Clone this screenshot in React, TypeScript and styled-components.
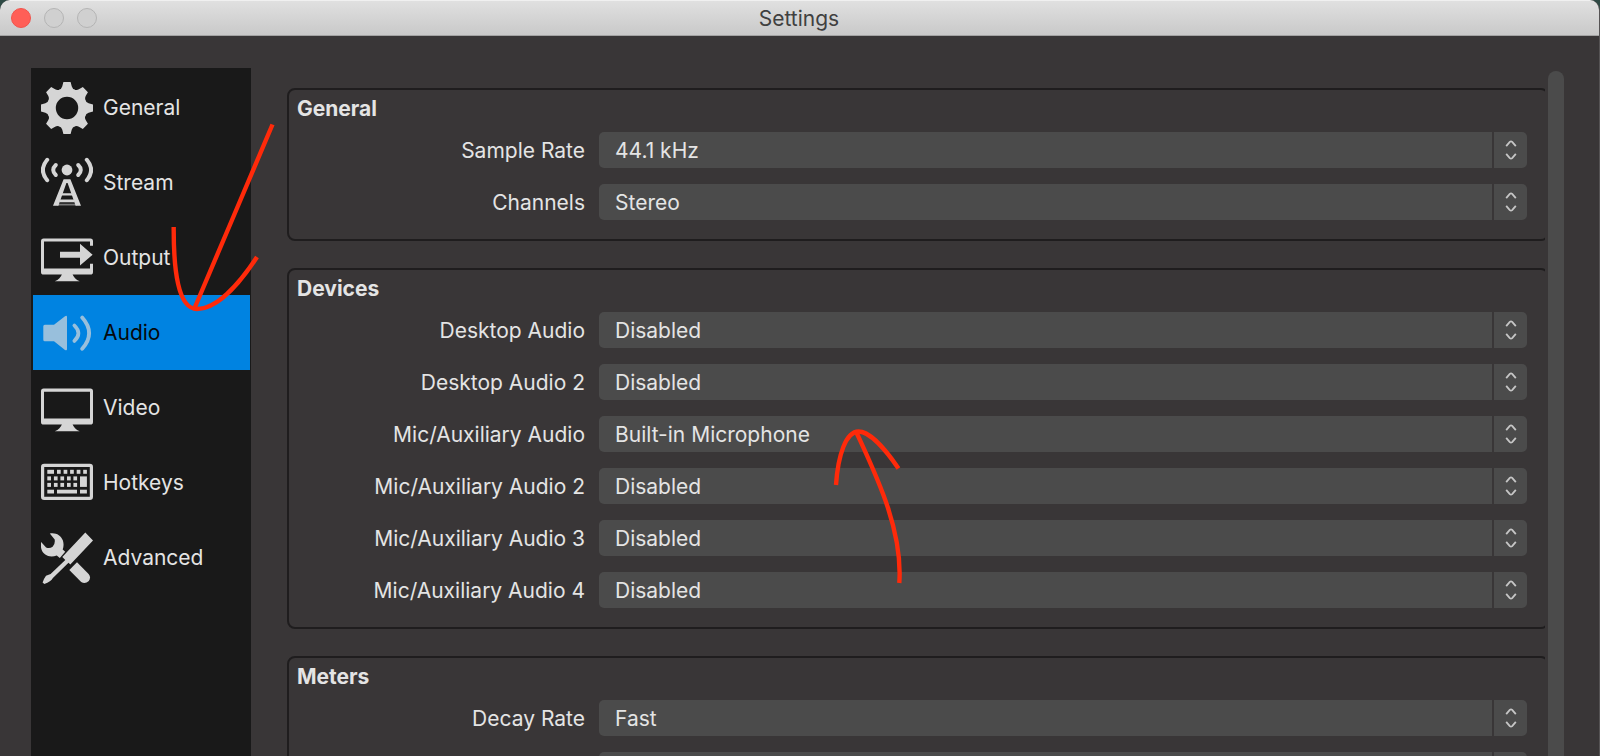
import React, { useId } from "react";
import styled, { createGlobalStyle } from "styled-components";

const GlobalStyle = createGlobalStyle`
  *, *::before, *::after { box-sizing: border-box; }
  body {
    margin: 0;
    background: #2f4a45;
    font-family: Inter, "Liberation Sans", sans-serif;
    font-size: 21px;
    line-height: 28px;
    color: #e4e4e4;
  }
`;

const Window = styled.div`
  display: flex;
  flex-direction: column;
  height: 100vh;
  overflow: hidden;
  border-radius: 10px 10px 0 0;
  border-right: 1px solid #555354;
  background: #393637;
`;

const TitleBar = styled.header`
  display: grid;
  grid-template-columns: 1fr auto 1fr;
  align-items: center;
  flex: none;
  height: 36px;
  padding: 0 12px 0 11px;
  border-top: 1px solid #f0f0f0;
  border-bottom: 1px solid #a3a3a3;
  background: linear-gradient(#e0e0e0, #c9c9c9);
`;

const WindowControls = styled.div`
  display: flex;
  gap: 13px;
`;

const WindowButton = styled.button<{ $close?: boolean }>`
  width: 20px;
  height: 20px;
  padding: 0;
  border: 1px solid ${(p) => (p.$close ? "#f0544d" : "#b4b4b4")};
  border-radius: 50%;
  background: ${(p) => (p.$close ? "#ff5f57" : "#d0d0d0")};
`;

const WindowTitle = styled.h1`
  margin: 0;
  padding-top: 2px;
  font-size: 21px;
  font-weight: 400;
  line-height: 28px;
  color: #404040;
`;

const Body = styled.div`
  display: flex;
  flex: 1;
  min-height: 0;
  padding: 32px 35px 0 31px;
`;

const Sidebar = styled.nav`
  flex: none;
  width: 220px;
  padding: 2px 1px 2px 2px;
  background: #191919;
`;

const NavButton = styled.button<{ $active?: boolean }>`
  display: flex;
  align-items: center;
  gap: 10px;
  width: 100%;
  height: 75px;
  padding: 0 8px;
  border: 0;
  font: inherit;
  text-align: left;
  color: ${(p) => (p.$active ? "#06090c" : "#e4e4e4")};
  background: ${(p) => (p.$active ? "#0083e1" : "transparent")};

  svg {
    flex: none;
    color: ${(p) => (p.$active ? "#98bfdc" : "#d5d5d5")};
  }
`;

const Panel = styled.main`
  display: flex;
  flex-direction: column;
  gap: 27px;
  flex: 1;
  min-width: 0;
  margin-left: 36px;
  padding-top: 20px;
  overflow: hidden;
`;

const Group = styled.fieldset`
  display: flex;
  flex-direction: column;
  flex: none;
  gap: 16px;
  min-width: 0;
  margin: 0 -4px 0 0;
  padding: 5px 20px 19px 8px;
  border: 2px solid #1f1d1e;
  border-radius: 8px;
`;

const GroupTitle = styled.h2`
  margin: 0 0 -7px;
  font-size: 21px;
  font-weight: 700;
  line-height: 28px;
`;

const Row = styled.div`
  display: grid;
  grid-template-columns: 288px 1fr;
  align-items: center;
  column-gap: 14px;
`;

const RowLabel = styled.label`
  padding-top: 2px;
  text-align: right;
`;

const SelectBox = styled.div`
  display: grid;
  grid-template-columns: 1fr 35px;
  height: 36px;
`;

const Select = styled.select`
  grid-area: 1 / 1 / 2 / 3;
  appearance: none;
  min-width: 0;
  padding: 2px 44px 0 16px;
  border: 0;
  border-radius: 5px;
  font: inherit;
  color: #e4e4e4;
  background: #4b4b4b;
`;

const Stepper = styled.span`
  display: flex;
  align-items: center;
  justify-content: center;
  grid-area: 1 / 2 / 2 / 3;
  border-left: 2px solid #393637;
  color: #c6c6c6;
  pointer-events: none;
`;

const ScrollTrack = styled.div`
  flex: none;
  width: 16px;
  margin: 3px 0 0 3px;
  border-radius: 8px 8px 0 0;
  background: #4b4b4b;
`;

const Annotation = styled.svg`
  position: absolute;
  top: 0;
  left: 0;
  pointer-events: none;
`;

function Icon({ children }: { children: React.ReactNode }) {
  return (
    <svg width="52" height="52" viewBox="0 0 52 52" fill="currentColor" aria-hidden="true">
      {children}
    </svg>
  );
}

const GearIcon = () => (
  <Icon>
    <circle cx="26" cy="26" r="15.4" fill="none" stroke="currentColor" strokeWidth="8.4" />
    {[0, 45, 90, 135, 180, 225, 270, 315].map((a) => (
      <path key={a} d="M22.4 0h7.2l1.2 4.4q.6 2.4 3.4 3.6v1h-16.400v-1q2.800-1.200 3.400-3.600z" transform={`rotate(${a} 26 26)`} />
    ))}
  </Icon>
);

const StreamIcon = () => (
  <Icon>
    <circle cx="26" cy="13" r="5.4" />
    <g fill="none" stroke="currentColor" strokeLinecap="round" strokeWidth="4">
      <path d="M14.800 8Q9.600 13 14.800 18M37.200 8Q42.400 13 37.200 18" />
      <path d="M6.200 2.800Q-2.400 13 6.200 23.200M45.800 2.800Q54.400 13 45.800 23.200" />
    </g>
    <path d="M22.600 22.200h6.800L40 48.800h-5.400L26.600 26h-1.200L17.400 48.800H12z" />
    <path d="M20.500 36.200h11v2.200h-11zM18.500 42.600h15v2.600h-15z" />
    <path d="M16 46.800h20v1.600H16z" opacity=".5" />
  </Icon>
);

const MonitorStand = () => <path d="M21 42h10.5q1.5 4.8 7.2 7.3H13.8Q19.500 46.8 21 42z" />;

const OutputIcon = () => (
  <Icon>
    <path d="M2.6 6.6h46.8q2.6 0 2.6 2.6v4.6h-3V9.6H3v26.8h46v-4.6h3v8.2q0 2.6-2.6 2.6H2.6Q0 42.6 0 40V9.2q0-2.6 2.6-2.6z" />
    <path d="M19 19.8h20v-8l12.6 11L39 33.6v-7.8H19z" />
    <MonitorStand />
  </Icon>
);

const VideoIcon = () => (
  <Icon>
    <path
      fillRule="evenodd"
      d="M2.6 6.6h46.8q2.6 0 2.6 2.6V40q0 2.6-2.6 2.6H2.6Q0 42.6 0 40V9.2q0-2.6 2.6-2.6zM3 9.8v26.6h46V9.800z"
    />
    <MonitorStand />
  </Icon>
);

const AudioIcon = () => (
  <Icon>
    <path d="M3.8 17.8H13L24 9.3q2-1.2 2 .8v32q0 2-2 .8L13 34.200H3.8q-1.5 0-1.5-1.5V19.300q0-1.5 1.5-1.5z" />
    <g fill="none" stroke="currentColor" strokeLinecap="round" strokeWidth="3.8">
      <path d="M33.400 18.5Q41.400 26.200 33.400 33.900" />
      <path d="M41.200 10.600Q55 26.200 41.200 41.800" />
    </g>
  </Icon>
);

const keys: [number, number, number, number][] = [
  [6.3, 12.8, 6.7, 4], [16, 12.8, 3.7, 4], [22.6, 12.8, 3.7, 4], [29.1, 12.8, 3.7, 4], [35.7, 12.8, 3.7, 4], [42.2, 12.8, 3.7, 4],
  [6.3, 19.4, 3.7, 4], [12.9, 19.4, 3.7, 4], [19.4, 19.4, 3.7, 4], [26, 19.4, 3.7, 4], [32.4, 19.4, 3.7, 4], [39, 19.4, 6.9, 10.5],
  [6.3, 25.9, 3.7, 4], [12.9, 25.9, 3.7, 4], [19.4, 25.9, 3.7, 4], [26, 25.9, 3.7, 4], [32.4, 25.9, 3.7, 4],
  [6.3, 32.7, 6.7, 3.8], [16, 32.7, 20, 3.8], [39, 32.7, 6.9, 3.8],
];

const KeyboardIcon = () => (
  <Icon>
    <rect x="1.6" y="8.3" width="48.8" height="33" rx="1.6" fill="none" stroke="currentColor" strokeWidth="3.2" />
    {keys.map(([x, y, w, h]) => (
      <rect key={`${x}-${y}`} x={x} y={y} width={w} height={h} />
    ))}
  </Icon>
);

const ToolsIcon = () => (
  <Icon>
    <path d="M44.3.5L52 8.5 29.300 32.5l-1.8-1.7L11.9 46q-1.8 3.6-8.6 6l-1.7-1.5Q3 46.5 5 43.8l4.6-1.9L24.3 27.9l-3-2.800z" />
    <path d="M8.8 1.5C14.5.2 20 3.2 21.9 8.4c1 3.2.8 6.4-.2 9l2.5 2.3-5.4 6.3-3-2.5C8.5 26 2.5 23.2.6 17.800-.2 15.200-.4 12.5.1 10l5 5.4q3.4 1.5 6.5-.6 2.7-2.3 2.1-7.300z" />
    <path d="M36 30.2l11.6 11.7q2.8 3.6.2 7-3.500 3.5-7.600 1.200L28.300 37.900z" />
  </Icon>
);

const navItems = [
  { label: "General", icon: GearIcon },
  { label: "Stream", icon: StreamIcon },
  { label: "Output", icon: OutputIcon },
  { label: "Audio", icon: AudioIcon },
  { label: "Video", icon: VideoIcon },
  { label: "Hotkeys", icon: KeyboardIcon },
  { label: "Advanced", icon: ToolsIcon },
];

const groups = [
  {
    title: "General",
    rows: [
      ["Sample Rate", "44.1 kHz"],
      ["Channels", "Stereo"],
    ],
  },
  {
    title: "Devices",
    rows: [
      ["Desktop Audio", "Disabled"],
      ["Desktop Audio 2", "Disabled"],
      ["Mic/Auxiliary Audio", "Built-in Microphone"],
      ["Mic/Auxiliary Audio 2", "Disabled"],
      ["Mic/Auxiliary Audio 3", "Disabled"],
      ["Mic/Auxiliary Audio 4", "Disabled"],
    ],
  },
  {
    title: "Meters",
    rows: [
      ["Decay Rate", "Fast"],
      ["", ""],
    ],
  },
];

function SettingRow({ label, value }: { label: string; value: string }) {
  const id = useId();
  return (
    <Row>
      <RowLabel htmlFor={id}>{label}</RowLabel>
      <SelectBox>
        <Select id={id} defaultValue={value}>
          <option value={value}>{value}</option>
        </Select>
        <Stepper>
          <svg width="12" height="20" viewBox="0 0 12 20" fill="none" stroke="currentColor" strokeWidth="1.8" aria-hidden="true">
            <path d="M1.2 6.200L4.800 1.900Q6 .9 7.200 1.900L10.800 6.200M1.200 13.800L4.800 18.100Q6 19.100 7.200 18.100L10.800 13.800" />
          </svg>
        </Stepper>
      </SelectBox>
    </Row>
  );
}

export default function App() {
  return (
    <>
      <GlobalStyle />
      <Window>
        <TitleBar>
          <WindowControls>
            <WindowButton $close aria-label="Close" />
            <WindowButton aria-label="Minimize" />
            <WindowButton aria-label="Zoom" />
          </WindowControls>
          <WindowTitle>Settings</WindowTitle>
        </TitleBar>
        <Body>
          <Sidebar>
            {navItems.map(({ label, icon: NavIcon }) => (
              <NavButton key={label} $active={label === "Audio"}>
                <NavIcon />
                {label}
              </NavButton>
            ))}
          </Sidebar>
          <Panel>
            {groups.map((group) => (
              <Group key={group.title}>
                <GroupTitle>{group.title}</GroupTitle>
                {group.rows.map(([label, value]) => (
                  <SettingRow key={label} label={label} value={value} />
                ))}
              </Group>
            ))}
          </Panel>
          <ScrollTrack />
        </Body>
      </Window>
      <Annotation width="1000" height="620" viewBox="0 0 1000 620" fill="none" stroke="#ff2a0a" strokeWidth="4.4" aria-hidden="true">
        <path d="M272.500 124.500L232 220L195 307" />
        <path d="M173.700 227C173.500 270 178 309 197 309C216 309 238 286 257 257" />
        <path d="M836 485C838 455 846 431.500 858.500 431.500C870 431.500 886 450 898.500 468.500" />
        <path d="M856.700 433C876 475 903 530 899.300 583" />
      </Annotation>
    </>
  );
}
